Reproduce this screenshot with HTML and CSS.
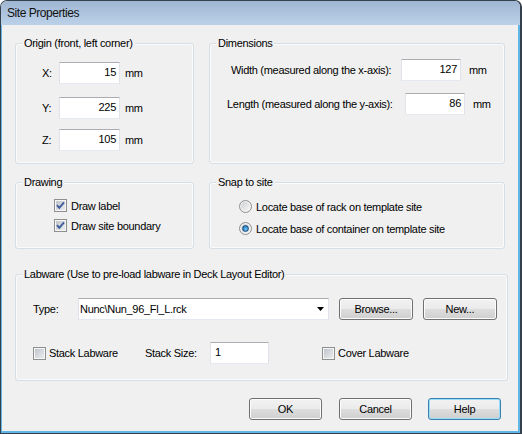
FILE: index.html
```html
<!DOCTYPE html>
<html>
<head>
<meta charset="utf-8">
<title>Site Properties</title>
<link rel="stylesheet" href="styles.css">
</head>
<body>
<div class="window">
  <div class="titlebar">Site Properties</div>
  <div class="client">
    <div class="row row1">
      <section class="group origin">
        <div class="gtitle">Origin (front, left corner)</div>
        <div class="coord c-x"><span class="clabel">X:</span><div class="field num">15</div><span class="unit">mm</span></div>
        <div class="coord c-y"><span class="clabel">Y:</span><div class="field num">225</div><span class="unit">mm</span></div>
        <div class="coord c-z"><span class="clabel">Z:</span><div class="field num">105</div><span class="unit">mm</span></div>
      </section>
      <section class="group dims">
        <div class="gtitle">Dimensions</div>
        <div class="dim d-w"><span class="dlabel">Width (measured along the x-axis):</span><div class="field num">127</div><span class="unit">mm</span></div>
        <div class="dim d-l"><span class="dlabel">Length (measured along the y-axis):</span><div class="field num">86</div><span class="unit">mm</span></div>
      </section>
    </div>

    <div class="row row2">
      <section class="group drawing">
        <div class="gtitle">Drawing</div>
        <div class="opt o1"><span class="cb"><svg width="11" height="11" viewBox="0 0 11 11"><path d="M2 5.2 L4.3 7.8 L9 2.3" fill="none" stroke="#3f5b9a" stroke-width="1.9"/></svg></span><span class="otext">Draw label</span></div>
        <div class="opt o2"><span class="cb"><svg width="11" height="11" viewBox="0 0 11 11"><path d="M2 5.2 L4.3 7.8 L9 2.3" fill="none" stroke="#3f5b9a" stroke-width="1.9"/></svg></span><span class="otext">Draw site boundary</span></div>
      </section>
      <section class="group snap">
        <div class="gtitle">Snap to site</div>
        <div class="opt r1"><span class="rb"></span><span class="otext">Locate base of rack on template site</span></div>
        <div class="opt r2"><span class="rb"><span class="dot"></span></span><span class="otext">Locate base of container on template site</span></div>
      </section>
    </div>

    <section class="group labware">
      <div class="gtitle">Labware (Use to pre-load labware in Deck Layout Editor)</div>
      <div class="typerow">
        <span class="tlabel">Type:</span>
        <div class="combo"><span class="ctext">Nunc\Nun_96_Fl_L.rck</span><svg class="arrow" width="7" height="4" viewBox="0 0 7 4"><polygon points="0,0 7,0 3.5,4" fill="#000"/></svg></div>
        <div class="btn browse">Browse...</div>
        <div class="btn new">New...</div>
      </div>
      <div class="stackrow">
        <div class="opt stack"><span class="cb"></span><span class="otext">Stack Labware</span></div>
        <span class="slabel">Stack Size:</span>
        <div class="field size">1</div>
        <div class="opt cover"><span class="cb"></span><span class="otext">Cover Labware</span></div>
      </div>
    </section>

    <div class="buttons">
      <div class="btn ok">OK</div>
      <div class="btn cancel">Cancel</div>
      <div class="btn help">Help</div>
    </div>
  </div>
</div>
</body>
</html>
```

FILE: styles.css
```css
* { box-sizing: border-box; }
html, body { margin: 0; padding: 0; }
body {
  width: 522px;
  height: 434px;
  overflow: hidden;
  background: #ffffff;
  font-family: "Liberation Sans", Arial, sans-serif;
  font-size: 11px;
  letter-spacing: -0.3px;
  color: #000;
}

.window {
  width: 522px;
  height: 434px;
  border: 1px solid #34404c;
  border-right-width: 2px;
  border-radius: 7px 7px 0 0;
  background: #f0f0f0;
  display: flex;
  flex-direction: column;
  overflow: hidden;
}

.titlebar {
  flex: none;
  height: 24px;
  padding-left: 6px;
  background: linear-gradient(#9fb6d2, #bcd1e9);
  font-size: 12px;
  letter-spacing: -0.45px;
  line-height: 25px;
  color: #111;
}

.client {
  flex: 1;
  border-style: solid;
  border-color: #62b6e4;
  border-width: 0 2px 2px 1px;
  padding: 18px 0 0 13px;
  display: flex;
  flex-direction: column;
}

.row { display: flex; gap: 15px; }
.row2 { margin-top: 18px; }

.group {
  border: 1px solid #d5dfe5;
  border-radius: 3px;
  box-shadow: inset 0 0 0 1px #fbfbfb;
}
.gtitle {
  margin: -7px 0 0 6px;
  padding: 0 2px;
  width: fit-content;
  line-height: 13px;
  background: #f0f0f0;
}

.origin { width: 179px; height: 121px; }
.dims { width: 296px; height: 121px; }
.drawing { width: 179px; height: 67px; }
.snap { width: 296px; height: 67px; }
.labware { width: 493px; height: 107px; margin-top: 25px; }

.field {
  height: 22px;
  background: #fff;
  border: 1px solid;
  border-color: #abadb3 #e2e3ea #e3e9ef #e2e3ea;
  line-height: 19px;
  padding: 0 3px;
}
.num { text-align: right; }

.coord { display: flex; align-items: center; height: 22px; margin-left: 26px; }
.c-x { margin-top: 12px; }
.c-y { margin-top: 13px; }
.c-z { margin-top: 10px; }
.clabel { width: 17px; }
.coord .field { width: 61px; }
.unit { margin-left: 5px; }

.dim { display: flex; align-items: center; height: 22px; }
.d-w { margin-top: 9px; margin-left: 21px; }
.d-l { margin-top: 12px; margin-left: 17px; }
.d-w .dlabel { width: 170px; }
.d-l .dlabel { width: 178px; }
.dim .field { width: 60px; }
.dim .unit { margin-left: 8px; }

.opt { display: flex; align-items: center; height: 13px; }
.otext { margin-left: 4px; white-space: nowrap; }
.drawing .opt { margin-left: 38px; }
.o1 { margin-top: 10px; }
.o2 { margin-top: 7px; }
.snap .opt { margin-left: 29px; }
.r1 { margin-top: 11px; }
.r2 { margin-top: 9px; }

.cb {
  flex: none;
  width: 13px;
  height: 13px;
  border: 1px solid #8e8f8f;
  background: linear-gradient(135deg, #bcc1c7, #eef0f2);
  box-shadow: inset 0 0 0 1px #f6f6f6;
  display: flex;
}
.cb svg { display: block; }

.rb {
  flex: none;
  width: 13px;
  height: 13px;
  border-radius: 50%;
  border: 1px solid #8e8f8f;
  background: linear-gradient(135deg, #c9ccd1, #fbfbfb);
  box-shadow: inset 0 0 0 1px #f4f4f4;
  display: flex;
  align-items: center;
  justify-content: center;
}
.dot {
  width: 7px;
  height: 7px;
  border-radius: 50%;
  border: 1px solid #21517f;
  background: radial-gradient(circle at 55% 60%, #7fd0fa 0, #2e86c9 55%, #1d4e80 100%);
}

.typerow { display: flex; align-items: center; height: 22px; margin: 17px 0 0 17px; }
.tlabel { width: 45px; }
.combo {
  width: 251px;
  height: 22px;
  background: #fff;
  border: 1px solid;
  border-color: #abadb3 #e2e3ea #e3e9ef #e2e3ea;
  display: flex;
  align-items: center;
  padding-left: 1px;
}
.arrow { margin-left: auto; margin-right: 4px; display: block; }

.btn {
  flex: none;
  width: 74px;
  height: 22px;
  border: 1px solid #707070;
  border-radius: 3px;
  background: linear-gradient(#f2f2f2 0%, #ebebeb 48%, #dddddd 52%, #cfcfcf 100%);
  box-shadow: inset 0 0 0 1px #fcfcfc;
  text-align: center;
  line-height: 20px;
}
.browse { margin-left: 10px; }
.new { margin-left: 10px; }

.stackrow { display: flex; align-items: center; height: 22px; margin: 22px 0 0 17px; }
.stack { width: 112px; }
.stack .otext, .cover .otext { margin-left: 3px; }
.slabel { width: 65px; }
.size { width: 59px; padding-left: 4px; }
.cover { margin-left: 53px; }

.buttons {
  display: flex;
  justify-content: flex-end;
  margin-top: 17px;
  padding-right: 17px;
}
.buttons .btn { width: 73px; }
.ok { margin-right: 17px; }
.cancel { margin-right: 16px; }
.help {
  width: 72px;
  border-color: #3c7fb1;
  box-shadow: inset 0 0 0 1px #97def8;
}
```
